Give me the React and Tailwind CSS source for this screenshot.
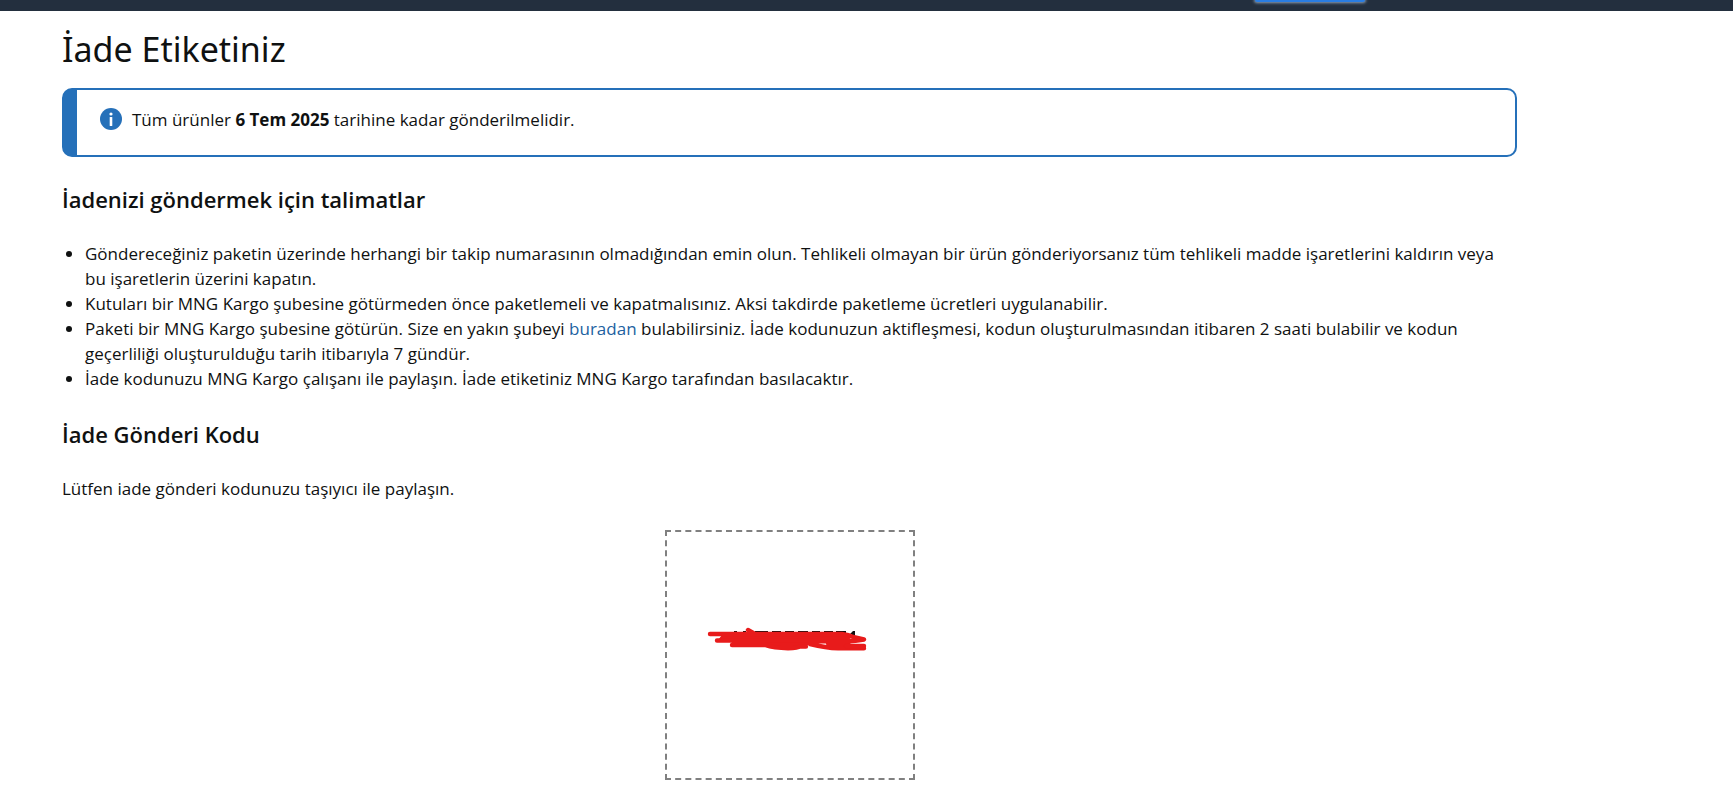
// src/App.jsx
const steps = [
  <>
    Göndereceğiniz paketin üzerinde herhangi bir takip numarasının olmadığından emin olun. Tehlikeli olmayan bir ürün
    gönderiyorsanız tüm tehlikeli madde işaretlerini kaldırın veya bu işaretlerin üzerini kapatın.
  </>,
  <>
    Kutuları bir MNG Kargo şubesine götürmeden önce paketlemeli ve kapatmalısınız. Aksi takdirde paketleme ücretleri
    uygulanabilir.
  </>,
  <>
    Paketi bir MNG Kargo şubesine götürün. Size en yakın şubeyi{' '}
    <a href="#subeler" className="text-[#2162a1] hover:underline">buradan</a> bulabilirsiniz. İade kodunuzun
    aktifleşmesi, kodun oluşturulmasından itibaren 2 saati bulabilir ve kodun geçerliliği oluşturulduğu tarih itibarıyla
    7 gündür.
  </>,
  <>İade kodunuzu MNG Kargo çalışanı ile paylaşın. İade etiketiniz MNG Kargo tarafından basılacaktır.</>,
];

function TopBar() {
  return (
    <header className="h-[11px] bg-[#232f3e] overflow-hidden">
      <div className="ml-[1255px] h-[2px] w-[110px] rounded-b-lg bg-[#2a7de1] shadow-[0_0_3px_1px_#8fa3b8]" />
    </header>
  );
}

function InfoIcon() {
  return (
    <svg viewBox="0 0 22 22" className="mt-px size-[22px] shrink-0" aria-hidden="true">
      <circle cx="11" cy="11" r="11" fill="#2570b9" />
      <circle cx="11" cy="6" r="1.6" fill="#fff" />
      <rect x="9.7" y="9" width="2.6" height="9" rx="0.6" fill="#fff" />
    </svg>
  );
}

// red marker strokes over the shipment code
function HiddenCode() {
  return (
    <svg viewBox="0 0 168 32" className="mb-8 h-8 w-[168px]" role="img" aria-label="Gizli kod">
      <g fill="#111">
        <path d="M28 8h3v3h-3zM37 8h3v3h-3zM49 8h13v3H49zM66 8h9v3h-9zM79 8h9v3h-9zM92 8h10v3H92zM106 8h8v3h-8zM118 8h9v3h-9zM130 8h10v4h-10z" />
        <path d="M144 11l3-3h2v7h-3v-4z" />
      </g>
      <g fill="#e81b1b" stroke="#e81b1b" strokeLinecap="round" strokeLinejoin="round" strokeWidth="4.4">
        <path d="M4 11H42L42 7L48 11H136Q142 12 146 14L140 19H118L104 22H100Q88 26 76 25Q66 24 59 22H27L30 17H12L16 12Z" stroke="none" />
        <path
          d="M4 11H46L42 7L49 11H136Q143 12 147 14L158 16.500Q150 18 140 18.500L108 18M11 17.500H110M26 22H59Q68 25 82 25.300Q92 25 94 23.500H100M104 21Q120 25 132 25.200H158Q148 24 143 22.500L122 20"
          fill="none"
        />
        <path d="M140 23H158" fill="none" />
      </g>
    </svg>
  );
}

export default function App() {
  return (
    <div className="bg-white font-['Open_Sans','Noto_Sans',sans-serif] text-[17px] leading-[25px] text-[#0f1111]">
      <TopBar />
      <main className="mx-[62px] max-w-[1455px] pt-4 pb-[7px]">
        <h1 className="font-['Noto_Sans',sans-serif] text-[34px] leading-[45px]">İade Etiketiniz</h1>

        <div className="mt-4 flex h-[69px] items-start gap-2.5 rounded-[10px] border-2 border-l-[15px] border-[#2570b9] pt-[17px] pl-[23px]">
          <InfoIcon />
          <p>
            Tüm ürünler <b>6 Tem 2025</b> tarihine kadar gönderilmelidir.
          </p>
        </div>

        <h2 className="mt-[27px] text-[22px] leading-[30px] font-semibold">İadenizi göndermek için talimatlar</h2>
        <ul className="mt-[27px] list-disc pl-[23px]">
          {steps.map((step, i) => (
            <li key={i}>{step}</li>
          ))}
        </ul>

        <h2 className="mt-7 text-[22px] leading-[30px] font-semibold">İade Gönderi Kodu</h2>
        <p className="mt-[27px]">Lütfen iade gönderi kodunuzu taşıyıcı ile paylaşın.</p>

        <div className="mx-auto mt-[29px] flex size-[250px] items-center justify-center border-2 border-dashed border-[#808080]">
          <HiddenCode />
        </div>
      </main>
    </div>
  );
}
